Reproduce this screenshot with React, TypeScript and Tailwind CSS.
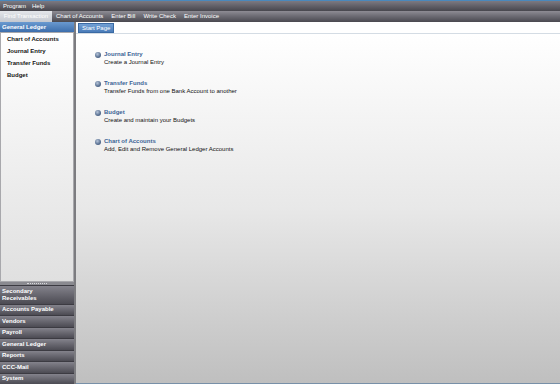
import React from "react";

const tools = ["Chart of Accounts", "Enter Bill", "Write Check", "Enter Invoice"];
const ledgerLinks = ["Chart of Accounts", "Journal Entry", "Transfer Funds", "Budget"];
const navButtons = ["Accounts Payable", "Vendors", "Payroll", "General Ledger", "Reports", "CCC-Mail", "System"];

const tasks = [
  { title: "Journal Entry", text: "Create a Journal Entry" },
  { title: "Transfer Funds", text: "Transfer Funds from one Bank Account to another" },
  { title: "Budget", text: "Create and maintain your Budgets" },
  { title: "Chart of Accounts", text: "Add, Edit and Remove General Ledger Accounts" },
];

function NavButton({ children, tall }: { children: React.ReactNode; tall?: boolean }) {
  return (
    <div
      className={`flex items-center px-[2px] border-t border-[#3c3b42] bg-gradient-to-b from-[#84838c] to-[#4c4b53] text-white font-bold leading-[7px] ${
        tall ? "h-[18.5px]" : "h-[11.5px]"
      }`}
    >
      {children}
    </div>
  );
}

export default function App() {
  return (
    <div className="w-[560px] h-[384px] flex flex-col overflow-hidden text-[6px] font-['Liberation_Sans',Arial,sans-serif] bg-[#c0c0c0]">
      {/* menu bar */}
      <div className="h-[11px] flex items-center gap-[6px] px-[3px] border-t border-[#4a88bc] bg-gradient-to-b from-[#7c7a82] to-[#48474e] text-white">
        <span>Program</span>
        <span>Help</span>
      </div>

      {/* toolbar */}
      <div className="h-[11px] flex items-stretch bg-gradient-to-b from-[#8e8c94] via-[#6a6971] to-[#4a4950] text-white">
        <div className="w-[52px] flex items-center justify-center bg-gradient-to-b from-[#e4e6ea] to-[#c4c8d0] text-white">
          Find Transaction
        </div>
        {tools.map((t) => (
          <div key={t} className="flex items-center px-[4px]">
            {t}
          </div>
        ))}
      </div>

      <div className="flex-1 flex min-h-0">
        {/* left panel */}
        <div className="w-[76px] flex flex-col border-r-2 border-[#7c7c80] bg-[#9a9a9e]">
          <div className="h-[10px] flex items-center px-[2px] bg-gradient-to-b from-[#6a9ad0] to-[#3d6eac] text-white font-bold">
            General Ledger
          </div>
          <div className="flex-1 flex flex-col gap-[6px] pt-[3px] pl-[6px] border border-[#a8a8ac] bg-gradient-to-b from-white to-[#e0e0e0] text-[#141414] font-bold">
            {ledgerLinks.map((l) => (
              <div key={l} className="leading-[6px]">
                {l}
              </div>
            ))}
          </div>
          <div className="h-[3px] flex items-center justify-center bg-[#8a8a90]">
            <div className="w-[20px] border-t border-dotted border-[#d8d8dc]" />
          </div>
          <NavButton tall>
            <span>
              Secondary
              <br />
              Receivables
            </span>
          </NavButton>
          {navButtons.map((n) => (
            <NavButton key={n}>{n}</NavButton>
          ))}
        </div>

        {/* main area */}
        <div className="flex-1 flex flex-col">
          <div className="h-[12px] flex items-end pl-[2px] bg-white border-b border-[#d4dce4]">
            <div className="h-[10px] px-[3px] flex items-center bg-gradient-to-b from-[#72a0d4] to-[#4a7cb8] border border-[#3a6aa4] text-white">
              Start Page
            </div>
          </div>
          <div className="flex-1 flex flex-col gap-[15px] pt-[17px] pl-[19px] bg-gradient-to-b from-white via-[#e8e8e8] to-[#bfbfbf]">
            {tasks.map((t) => (
              <div key={t.title} className="flex gap-[3px]">
                <div className="mt-[1px] w-[6px] h-[6px] rounded-full bg-[radial-gradient(circle_at_40%_35%,#b8c6da,#566e90_60%,#3c5070)]" />
                <div className="flex flex-col gap-[2px] leading-[6px]">
                  <span className="font-bold text-[#3c6496]">{t.title}</span>
                  <span className="text-[#111]">{t.text}</span>
                </div>
              </div>
            ))}
          </div>
          <div className="h-[1px] bg-[#7890a8]" />
        </div>
      </div>
    </div>
  );
}
